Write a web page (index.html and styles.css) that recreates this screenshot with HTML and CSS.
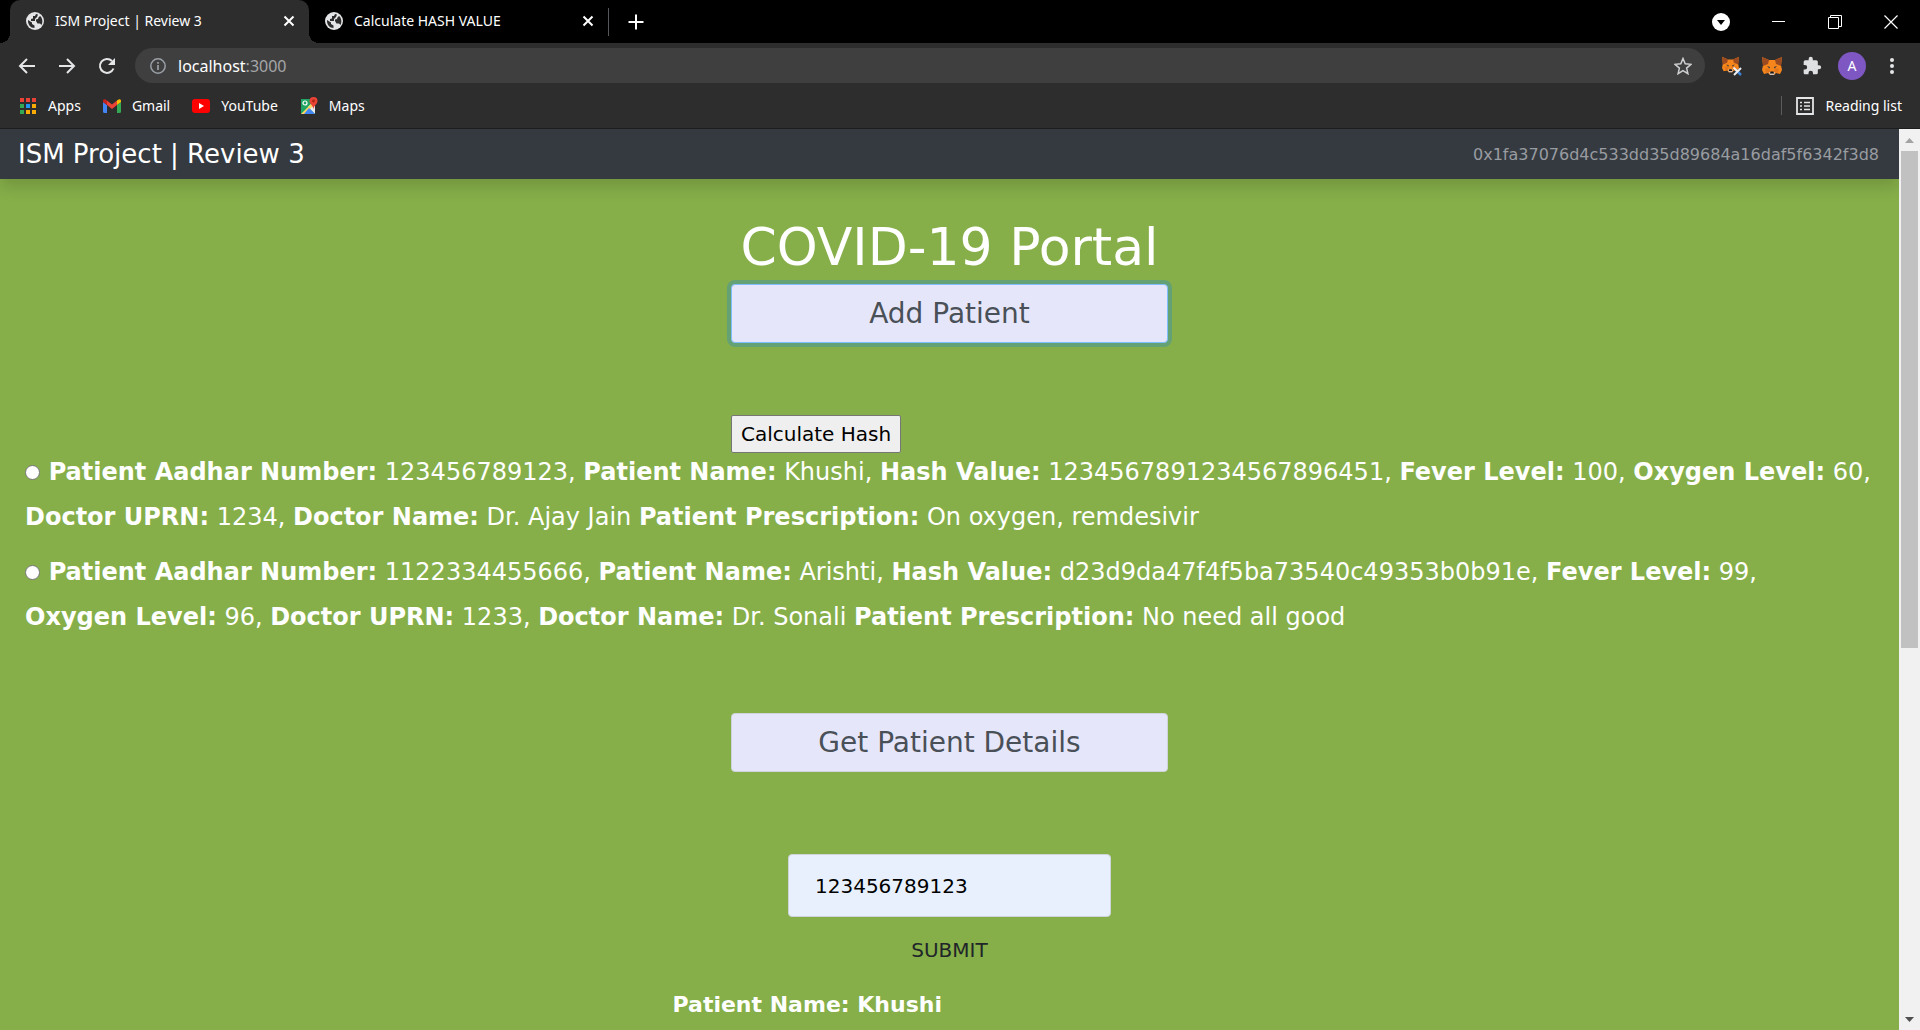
FILE: index.html
```html
<!DOCTYPE html>
<html lang="en">
<head>
<meta charset="utf-8">
<title>ISM Project | Review 3</title>
<link rel="stylesheet" href="styles.css">
</head>
<body>
<svg class="sprite" aria-hidden="true">
  <symbol id="globe" viewBox="0 0 18 18">
    <circle cx="9" cy="9" r="9" fill="#e4e5e7"/>
    <path d="M2 8l4 2.500v1.500l2.500 1.500v2.500C4.500 16 1.700 12.500 2 8z" fill="#2d2d2e"/>
    <path d="M10 2l-1 2H7v2.500L5 7v2h5l1.500 2.500h2.500l1.500 1.500c1.500-3 1-7-1.500-9l-1.500 1.500-.500 1.500-2 .5V9H9V7l2-2 1-2.500z" fill="#2d2d2e"/>
  </symbol>
  <symbol id="cross" viewBox="0 0 12 12"><path d="M1.500 1.500l9 9M10.500 1.500l-9 9" fill="none" stroke="currentColor" stroke-width="2"/></symbol>
  <symbol id="fox" viewBox="0 0 20 20">
    <path d="M0 1l7 3h6l7-3-1 8 1 5-2 4-4-1-2 2H8l-2-2-4 1-2-4 1-5z" fill="#f6851b"/>
    <path d="M0 1l7 3-1 4-5 2zM20 1l-7 3 1 4 5 2z" fill="#9c4a20"/>
    <path d="M3 13l4-1 1 4-4 1zM17 13l-4-1-1 4 4 1z" fill="#e2761b"/>
    <path d="M5 10l3 1-.5 1.500zM15 10l-3 1 .5 1.500z" fill="#233447"/>
    <path d="M7 16h6l-1 3H8z" fill="#d7c1b3"/><path d="M8.500 15.500h3l.5 2H8z" fill="#161616"/>
  </symbol>
</svg>

<div class="window">
  <header class="chrome">
    <div class="tabstrip">
      <div class="tab tab-active">
        <svg class="icon18"><use href="#globe"/></svg>
        <span class="tab-title">ISM Project | Review 3</span>
        <button class="plain" aria-label="Close tab"><svg class="icon12"><use href="#cross"/></svg></button>
      </div>
      <div class="tab">
        <svg class="icon18"><use href="#globe"/></svg>
        <span class="tab-title">Calculate HASH VALUE</span>
        <button class="plain" aria-label="Close tab"><svg class="icon12"><use href="#cross"/></svg></button>
      </div>
      <button class="plain new-tab" aria-label="New tab"><svg class="icon16" viewBox="0 0 16 16"><path d="M8 0.500v15M0.500 8h15" stroke="#fff" stroke-width="2"/></svg></button>
      <div class="window-controls">
        <button class="plain" aria-label="Search tabs"><svg class="icon18" viewBox="0 0 18 18"><circle cx="9" cy="9" r="9" fill="#fff"/><path d="M5 7h8l-4 5z" fill="#000"/></svg></button>
        <button class="plain" aria-label="Minimize"><svg class="icon14" viewBox="0 0 14 14"><path d="M0 6.500h13" stroke="#fff"/></svg></button>
        <button class="plain" aria-label="Restore"><svg class="icon14" viewBox="0 0 14 14"><path d="M.5 2.500h10v11h-10zM2.500 2.500v-2h11v11h-3" fill="none" stroke="#fff"/></svg></button>
        <button class="plain" aria-label="Close window"><svg class="icon14" viewBox="0 0 14 14"><path d="M.5.5l13 13M13.500.5l-13 13" stroke="#fff" stroke-width="1.200"/></svg></button>
      </div>
    </div>

    <div class="toolbar">
      <button class="plain" aria-label="Back"><svg class="icon18" viewBox="0 0 18 18"><path d="M17 9H2M9 2L2 9l7 7" fill="none" stroke="#e4e5e7" stroke-width="2"/></svg></button>
      <button class="plain" aria-label="Forward"><svg class="icon18" viewBox="0 0 18 18"><path d="M1 9h15M9 2l7 7-7 7" fill="none" stroke="#e4e5e7" stroke-width="2"/></svg></button>
      <button class="plain" aria-label="Reload"><svg class="icon18" viewBox="0 0 18 18"><path d="M15.500 11.500A7 7 0 1 1 14 4" fill="none" stroke="#e4e5e7" stroke-width="2"/><path d="M17 1v7h-7z" fill="#e4e5e7"/></svg></button>
      <div class="omnibox">
        <svg class="icon16" viewBox="0 0 16 16"><circle cx="8" cy="8" r="7.200" fill="none" stroke="#9aa0a6" stroke-width="1.500"/><path d="M8 7v5M8 4v1.700" stroke="#9aa0a6" stroke-width="1.700"/></svg>
        <span class="address">localhost<span class="port">:3000</span></span>
        <button class="plain" aria-label="Bookmark"><svg class="icon18" viewBox="0 0 18 18"><path d="M9 1.500l2.200 5.300 5.800.5-4.400 3.800 1.300 5.600L9 13.700l-4.900 3 1.300-5.600L1 7.300l5.800-.5z" fill="none" stroke="#cfd0d2" stroke-width="1.500"/></svg></button>
      </div>
      <div class="extensions">
        <svg class="icon20" viewBox="0 0 20 20"><use href="#fox" width="17" height="17"/><path d="M14 14l5 5" stroke="#3b82d6" stroke-width="2.500"/><path d="M19 12l-7 7M11.500 11.500l4 4" stroke="#eee" stroke-width="2"/></svg>
        <svg class="icon20" viewBox="0 0 20 20"><use href="#fox" width="20" height="20"/></svg>
        <svg class="icon20" viewBox="0 0 24 24"><path d="M20.500 11H19V7a2 2 0 0 0-2-2h-4V3.500a2.500 2.500 0 0 0-5 0V5H4a2 2 0 0 0-2 2v3.800h1.500a2.700 2.700 0 0 1 0 5.400H2V20c0 1.100.9 2 2 2h3.800v-1.500a2.700 2.700 0 0 1 5.400 0V22H17a2 2 0 0 0 2-2v-4h1.500a2.500 2.500 0 0 0 0-5z" fill="#dfe0e2"/></svg>
        <button class="plain avatar">A</button>
        <svg class="icon20" viewBox="0 0 20 20"><g fill="#e4e5e7"><circle cx="10" cy="4" r="2"/><circle cx="10" cy="10" r="2"/><circle cx="10" cy="16" r="2"/></g></svg>
      </div>
    </div>

    <nav class="bookmarks">
      <a href="#"><svg class="icon18" viewBox="0 0 18 18"><path d="M1 1h4v4H1zM7 1h4v4H7zM13 1h4v4h-4z" fill="#ea4335"/><path d="M1 7h4v4H1zM1 13h4v4H1z" fill="#34a853"/><path d="M7 7h4v4H7z" fill="#2196f3"/><path d="M13 7h4v4h-4zM7 13h4v4H7zM13 13h4v4h-4z" fill="#fbab05"/></svg>Apps</a>
      <a href="#"><svg class="icon18" viewBox="0 0 18 18"><path d="M0 5l4 3v8H1.500Q0 16 0 14.500z" fill="#4285f4"/><path d="M18 5l-4 3v8h2.500q1.500 0 1.500-1.500z" fill="#34a853"/><path d="M4 3.500L9 7.500l5-4V8L9 12 4 8z" fill="#ea4335"/><path d="M0 5V4q0-3 4-.5V8L0 5z" fill="#c5221f"/><path d="M18 5V4q0-3-4-.5V8l4-3z" fill="#fbbc04"/></svg>Gmail</a>
      <a href="#"><svg class="icon18" viewBox="0 0 18 18"><rect y="2" width="18" height="14" rx="3" fill="#f00"/><path d="M7 6l5 3-5 3z" fill="#fff"/></svg>YouTube</a>
      <a href="#"><svg class="icon18" viewBox="0 0 18 18"><path d="M1 2h14v15H1z" fill="#1fa463"/><path d="M15 3v14L8 10z" fill="#e8eaed"/><path d="M1 17L14 4l2 2L5 17z" fill="#fdd663"/><path d="M4 17l5-6 6 6z" fill="#4285f4"/><circle cx="5" cy="6" r="2" fill="none" stroke="#fff" stroke-width="1.200"/><path d="M13.500 0A4 4 0 0 0 9.500 4c0 3 3 3.500 4 8 1-4.500 4-5 4-8a4 4 0 0 0-4-4z" fill="#ea4335"/><circle cx="13.500" cy="4" r="1.400" fill="#a52714"/></svg>Maps</a>
      <a class="reading-list" href="#"><svg class="icon18" viewBox="0 0 18 18"><path d="M1 1h16v16H1z" fill="none" stroke="#e4e5e7" stroke-width="1.800"/><path d="M4 5.500h2M4 9h2M4 12.500h2M8 5.500h6M8 9h6M8 12.500h6" stroke="#e4e5e7" stroke-width="1.700"/></svg>Reading list</a>
    </nav>
  </header>

  <div class="viewport">
    <div class="page">
      <nav class="navbar">
        <a class="brand" href="#">ISM Project | Review 3</a>
        <span class="account">0x1fa37076d4c533dd35d89684a16daf5f6342f3d8</span>
      </nav>
      <main class="portal">
        <h1>COVID-19 Portal</h1>
        <div class="column">
          <button class="wide-button focused">Add Patient</button>
          <button class="hash-button">Calculate Hash</button>
        </div>
        <div class="patients">
          <label class="patient"><input type="radio" name="patient"> <b>Patient Aadhar Number:</b> 123456789123, <b>Patient Name:</b> Khushi, <b>Hash Value:</b> 1234567891234567896451, <b>Fever Level:</b> 100, <b>Oxygen Level:</b> 60, <b>Doctor UPRN:</b> 1234, <b>Doctor Name:</b> Dr. Ajay Jain <b>Patient Prescription:</b> On oxygen, remdesivir</label>
          <label class="patient"><input type="radio" name="patient"> <b>Patient Aadhar Number:</b> 1122334455666, <b>Patient Name:</b> Arishti, <b>Hash Value:</b> d23d9da47f4f5ba73540c49353b0b91e, <b>Fever Level:</b> 99, <b>Oxygen Level:</b> 96, <b>Doctor UPRN:</b> 1233, <b>Doctor Name:</b> Dr. Sonali <b>Patient Prescription:</b> No need all good</label>
        </div>
        <div class="column">
          <button class="wide-button">Get Patient Details</button>
        </div>
        <form class="lookup">
          <input class="lookup-input" type="text" aria-label="Patient Aadhar Number" value="123456789123">
          <button class="submit" type="button">SUBMIT</button>
          <p class="result">Patient Name: Khushi</p>
        </form>
      </main>
    </div>
    <div class="scrollbar" aria-hidden="true">
      <svg class="arrow" viewBox="0 0 20 22"><path d="M6 14h9l-4.500-5z" fill="#a3a3a3"/></svg>
      <div class="track"><div class="thumb"></div></div>
      <svg class="arrow" viewBox="0 0 20 22"><path d="M6 9h9l-4.500 5z" fill="#505050"/></svg>
    </div>
  </div>
</div>
</body>
</html>
```

FILE: styles.css
```css
* { box-sizing: border-box; }
body { margin: 0; font-family: "DejaVu Sans", Verdana, sans-serif; }
.sprite { position: absolute; width: 0; height: 0; }
svg { flex: none; display: block; }
.icon12 { width: 12px; height: 12px; }
.icon14 { width: 14px; height: 14px; }
.icon16 { width: 16px; height: 16px; }
.icon18 { width: 18px; height: 18px; }
.icon20 { width: 20px; height: 20px; }
.plain { padding: 0; border: 0; background: none; color: #fff; font: inherit; }

.window { display: flex; flex-direction: column; height: 100vh; }

/* Browser frame */
.chrome { flex: none; background: #2d2d2e; color: #fff; font-family: "Noto Sans", "Segoe UI", sans-serif; border-bottom: 1px solid #1c1d1d; }
.tabstrip { display: flex; align-items: center; height: 43px; padding-left: 10px; background: #000; }
.tab { position: relative; display: flex; align-items: center; gap: 11px; width: 299px; height: 43px; padding: 0 14px 2px 16px; font-size: 14px; }
.tab-active { background: #2d2d2e; border-radius: 10px 10px 0 0; }
.tab-active::before,
.tab-active::after { content: ""; position: absolute; bottom: 0; width: 10px; height: 10px; }
.tab-active::before { right: 100%; background: radial-gradient(circle at 0 0, #000 10px, #2d2d2e 10px); }
.tab-active::after { left: 100%; background: radial-gradient(circle at 100% 0, #000 10px, #2d2d2e 10px); }
.tab-title { flex: 1; white-space: nowrap; }
.new-tab { height: 28px; padding-left: 19px; border-left: 1px solid #55575a; }
.window-controls { display: flex; align-items: center; gap: 42px; margin-left: auto; padding-right: 22px; }
.toolbar { display: flex; align-items: center; gap: 22px; height: 45px; padding: 0 14px 0 18px; }
.omnibox { flex: 1; display: flex; align-items: center; gap: 12px; height: 35px; padding: 0 13px 0 15px; border-radius: 18px; background: #3f3f40; font-size: 16px; margin-left: -3px; }
.address { flex: 1; }
.port { color: #a5a6a8; }
.extensions { display: grid; grid-template-columns: repeat(5, 28px); gap: 12px; align-items: center; justify-items: center; margin-left: -9px; }
.avatar { width: 28px; height: 28px; border-radius: 50%; background: #7e57c2; font-size: 14px; }
.bookmarks { display: flex; align-items: center; gap: 22px; height: 40px; padding: 0 18px 5px 19px; font-size: 14px; }
.bookmarks a { display: flex; align-items: center; gap: 11px; color: #fff; text-decoration: none; }
.bookmarks .reading-list { margin-left: auto; padding-left: 14px; border-left: 1px solid #5a5b5d; }

/* Page */
.viewport { flex: 1; min-height: 0; display: flex; }
.page { flex: 1; overflow: hidden; background: #86af49; color: #fff; }
.navbar { display: flex; align-items: center; justify-content: space-between; height: 50px; padding: 0 20px 0 18px; background: #343a40; box-shadow: 0 8px 16px rgba(0, 0, 0, .15); }
.brand { color: #fff; font-size: 26px; text-decoration: none; }
.account { color: #999ca0; font-size: 16px; }
.portal { display: flex; flex-direction: column; align-items: center; padding-top: 38px; }
h1 { margin: 0 0 7px; font-size: 52px; font-weight: 400; line-height: 60px; }
.column { width: 437px; }
.wide-button { display: block; width: 100%; height: 59px; border: 1px solid #ced4da; border-radius: 4px; background: #e6e6fa; color: #495057; font: inherit; font-size: 28px; }
.focused { border-color: #80bdff; box-shadow: 0 0 0 4px rgba(0, 123, 255, .25); }
.hash-button { height: 38px; margin-top: 72px; padding: 0 9px; border: 1px solid #767676; border-radius: 2px; background: #efefef; color: #000; font: inherit; font-size: 20px; }
.patients { display: flex; flex-direction: column; gap: 10px; align-self: stretch; margin: -3px 0 73px; padding: 0 25px; font-size: 24px; line-height: 45px; }
.patient b { white-space: nowrap; }
.patient input { appearance: none; width: 15px; height: 15px; margin: 0 1px 0 0; border: 1px solid #767676; border-radius: 50%; background: #fff; }
.lookup { display: flex; flex-direction: column; align-items: center; width: 554px; margin-top: 82px; }
.lookup-input { width: 323px; height: 63px; padding: 0 26px; border: 1px solid #ced4da; border-radius: 4px; background: #e8f0fe; color: #000; font: inherit; font-size: 20px; }
.submit { height: 40px; margin: 13px 0 20px; padding: 0 12px; border: 0; background: none; color: #212529; font: inherit; font-size: 20px; }
.result { align-self: stretch; margin: 0; font-size: 22px; font-weight: 700; line-height: 30px; }

.scrollbar { flex: none; display: flex; flex-direction: column; width: 21px; background: #f1f1f1; }
.arrow { width: 20px; height: 22px; }
.track { flex: 1; padding: 0 2px; }
.thumb { height: 58%; background: #c1c1c1; }
```
